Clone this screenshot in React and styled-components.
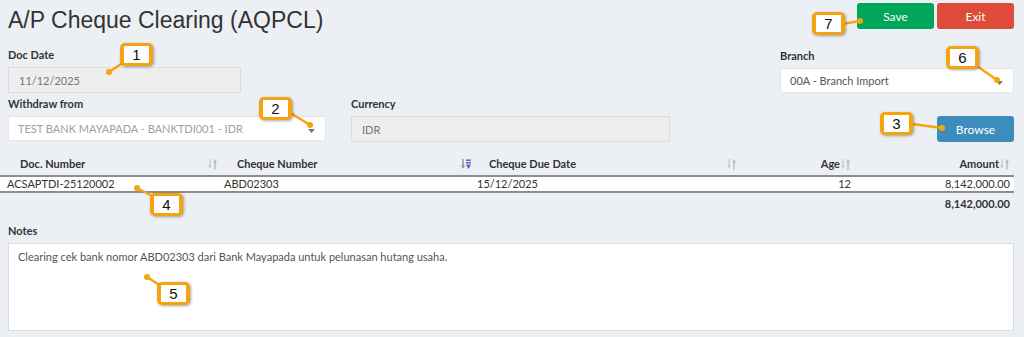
import styled, { createGlobalStyle } from "styled-components";

const GlobalStyle = createGlobalStyle`
  body {
    margin: 0;
    background: #ecf0f5;
    font-family: Lato, "Open Sans", sans-serif;
    color: #333;
  }
`;

const callouts = [
  { n: 1, x: 120, y: 43, from: [124, 62], to: [109, 72] },
  { n: 2, x: 259, y: 97, from: [292, 114], to: [310, 125] },
  { n: 3, x: 880, y: 112, from: [912, 124], to: [942, 128] },
  { n: 4, x: 150, y: 193, from: [154, 197], to: [137, 188] },
  { n: 5, x: 157, y: 282, from: [161, 286], to: [147, 277] },
  { n: 6, x: 946, y: 46, from: [974, 64], to: [997, 80] },
  { n: 7, x: 812, y: 12, from: [842, 24], to: [860, 21] },
];

function SortIcon({ active }) {
  return (
    <SortSvg width="11" height="12" viewBox="0 0 11 12">
      <path d="M3 1v9" stroke={active ? "#9a9a9a" : "#cfcfcf"} strokeWidth="1.6" />
      <path d="M0.8 7.5L3 10.8L5.2 7.5z" fill={active ? "#9a9a9a" : "#cfcfcf"} />
      {active ? (
        <g fill="#5a5fc4">
          <rect x="6" y="1.5" width="5" height="1.4" />
          <rect x="6" y="4" width="5" height="1.4" />
          <path d="M6 6.6h5L8.5 11z" />
        </g>
      ) : (
        <g fill="#bdbdbd">
          <path d="M8 2.5v9" stroke="#bdbdbd" strokeWidth="1.6" />
          <path d="M5.8 4.5L8 1.2L10.2 4.5z" />
        </g>
      )}
    </SortSvg>
  );
}

function Caret() {
  return (
    <CaretSvg width="7" height="4" viewBox="0 0 7 4">
      <path d="M0 0h7L3.5 4z" fill="#777" />
    </CaretSvg>
  );
}

export default function App() {
  return (
    <Root>
      <GlobalStyle />
      <Page>
        <TopRow>
          <Title>A/P Cheque Clearing (AQPCL)</Title>
          <Actions>
            <Button $bg="#00a65a">Save</Button>
            <Button $bg="#dd4b39">Exit</Button>
          </Actions>
        </TopRow>

        <FormRow>
          <Field $w={233}>
            <Label>Doc Date</Label>
            <Input $disabled>11/12/2025</Input>
          </Field>
          <Field $w={234}>
            <Label>Branch</Label>
            <Select $color="#555">
              00A - Branch Import
              <Caret />
            </Select>
          </Field>
        </FormRow>

        <FormRow>
          <Group>
            <Field $w={318}>
              <Label>Withdraw from</Label>
              <Select $color="#a0a0a0">
                TEST BANK MAYAPADA - BANKTDI001 - IDR
                <Caret />
              </Select>
            </Field>
            <Field $w={319}>
              <Label>Currency</Label>
              <Input $disabled>IDR</Input>
            </Field>
          </Group>
          <Button $bg="#3c8dbc">Browse</Button>
        </FormRow>

        <Table>
          <HeadCell $pl={20}>
            Doc. Number <SortIcon />
          </HeadCell>
          <HeadCell $pl={13}>
            Cheque Number <SortIcon active />
          </HeadCell>
          <HeadCell $pl={12}>
            Cheque Due Date <SortIcon />
          </HeadCell>
          <HeadCell $right>
            Age
            <SortIcon />
          </HeadCell>
          <HeadCell $right>
            Amount
            <SortIcon />
          </HeadCell>

          <Cell $pl={7}>ACSAPTDI-25120002</Cell>
          <Cell>ABD02303</Cell>
          <Cell>15/12/2025</Cell>
          <Cell $right>12</Cell>
          <Cell $right>8,142,000.00</Cell>

          <Total>8,142,000.00</Total>
        </Table>

        <Label>Notes</Label>
        <Notes>
          Clearing cek bank nomor ABD02303 dari Bank Mayapada untuk pelunasan
          hutang usaha.
        </Notes>
      </Page>

      <Connectors width="1024" height="337">
        {callouts.map((c) => (
          <g key={c.n}>
            <line
              x1={c.from[0]}
              y1={c.from[1]}
              x2={c.to[0]}
              y2={c.to[1]}
              stroke="#f5a30f"
              strokeWidth="2.5"
              strokeLinecap="round"
            />
            <circle cx={c.to[0]} cy={c.to[1]} r="3" fill="#f5a30f" />
          </g>
        ))}
      </Connectors>
      {callouts.map((c) => (
        <Badge key={c.n} style={{ left: c.x, top: c.y }}>
          <BadgeInner>{c.n}</BadgeInner>
        </Badge>
      ))}
    </Root>
  );
}

const Root = styled.div`
  position: relative;
  width: 1024px;
  height: 337px;
  overflow: hidden;
`;

const Page = styled.div`
  padding: 0 10px 0 8px;
`;

const TopRow = styled.div`
  display: flex;
  justify-content: space-between;
  align-items: flex-start;
  height: 48px;
`;

const Title = styled.h1`
  margin: 0;
  padding-top: 8px;
  font-family: "Liberation Sans", Arial, sans-serif;
  font-weight: normal;
  font-size: 23px;
  line-height: 24px;
  color: #333;
`;

const Actions = styled.div`
  display: flex;
  gap: 3px;
  margin-top: 3px;
`;

const Button = styled.button`
  width: 77px;
  height: 26px;
  border: none;
  border-radius: 3px;
  background: ${(p) => p.$bg};
  color: #fff;
  font-family: Lato, sans-serif;
  font-size: 12px;
  cursor: pointer;
`;

const FormRow = styled.div`
  display: flex;
  justify-content: space-between;
  align-items: flex-end;
  margin-bottom: 4px;
`;

const Group = styled.div`
  display: flex;
  gap: 25px;
`;

const Field = styled.div`
  width: ${(p) => p.$w}px;
`;

const Label = styled.div`
  font-size: 11px;
  font-weight: bold;
  line-height: 14px;
  color: #333;
  margin-bottom: 5px;
`;

const Input = styled.div`
  box-sizing: border-box;
  height: 26px;
  padding: 0 10px;
  display: flex;
  align-items: center;
  background: ${(p) => (p.$disabled ? "#eeeeee" : "#fff")};
  border: 1px solid #dcdcdc;
  font-size: 11px;
  color: #777;
`;

const Select = styled.div`
  box-sizing: border-box;
  height: 25px;
  padding: 0 10px 0 9px;
  display: flex;
  align-items: center;
  justify-content: space-between;
  background: #fff;
  border: 1px solid #e6e6e6;
  border-radius: 2px;
  font-size: 11px;
  color: ${(p) => p.$color};
`;

const CaretSvg = styled.svg`
  display: block;
  margin-top: 4px;
`;

const Table = styled.div`
  display: grid;
  grid-template-columns: 224px 253px 266px 112px 1fr;
  margin: 10px 0 9px -8px;
  font-size: 11px;
  color: #333;
`;

const HeadCell = styled.div`
  display: flex;
  align-items: center;
  justify-content: ${(p) => (p.$right ? "flex-end" : "space-between")};
  height: 23px;
  padding: ${(p) => (p.$right ? "0 4px 0 0" : `0 6px 0 ${p.$pl}px`)};
  font-weight: bold;
  border-bottom: 2px solid #8d8d8d;
`;

const SortSvg = styled.svg`
  display: block;
  flex: none;
`;

const Cell = styled.div`
  height: 14px;
  line-height: 14px;
  padding: 0 ${(p) => (p.$right ? "4px" : "0")} 0 ${(p) => p.$pl || 0}px;
  text-align: ${(p) => (p.$right ? "right" : "left")};
  background: #fff;
  border-bottom: 2px solid #8d8d8d;
  white-space: nowrap;
`;

const Total = styled.div`
  grid-column: 5;
  text-align: right;
  padding-right: 4px;
  line-height: 22px;
  font-weight: bold;
`;

const Notes = styled.div`
  box-sizing: border-box;
  height: 88px;
  padding: 5px 9px;
  background: #fff;
  border: 1px solid #dcdcdc;
  font-size: 11px;
  line-height: 16px;
  color: #555;
`;

const Connectors = styled.svg`
  position: absolute;
  left: 0;
  top: 0;
  pointer-events: none;
`;

const Badge = styled.div`
  position: absolute;
  box-sizing: border-box;
  width: 33px;
  height: 23px;
  padding: 3px 4px;
  background: #f5a30f;
  border-radius: 5px;
  box-shadow: 1px 1px 3px rgba(0, 0, 0, 0.35);
`;

const BadgeInner = styled.div`
  height: 17px;
  background: #fff;
  text-align: center;
  font-family: "Liberation Sans", Arial, sans-serif;
  font-size: 15px;
  line-height: 17px;
  color: #111;
`;
